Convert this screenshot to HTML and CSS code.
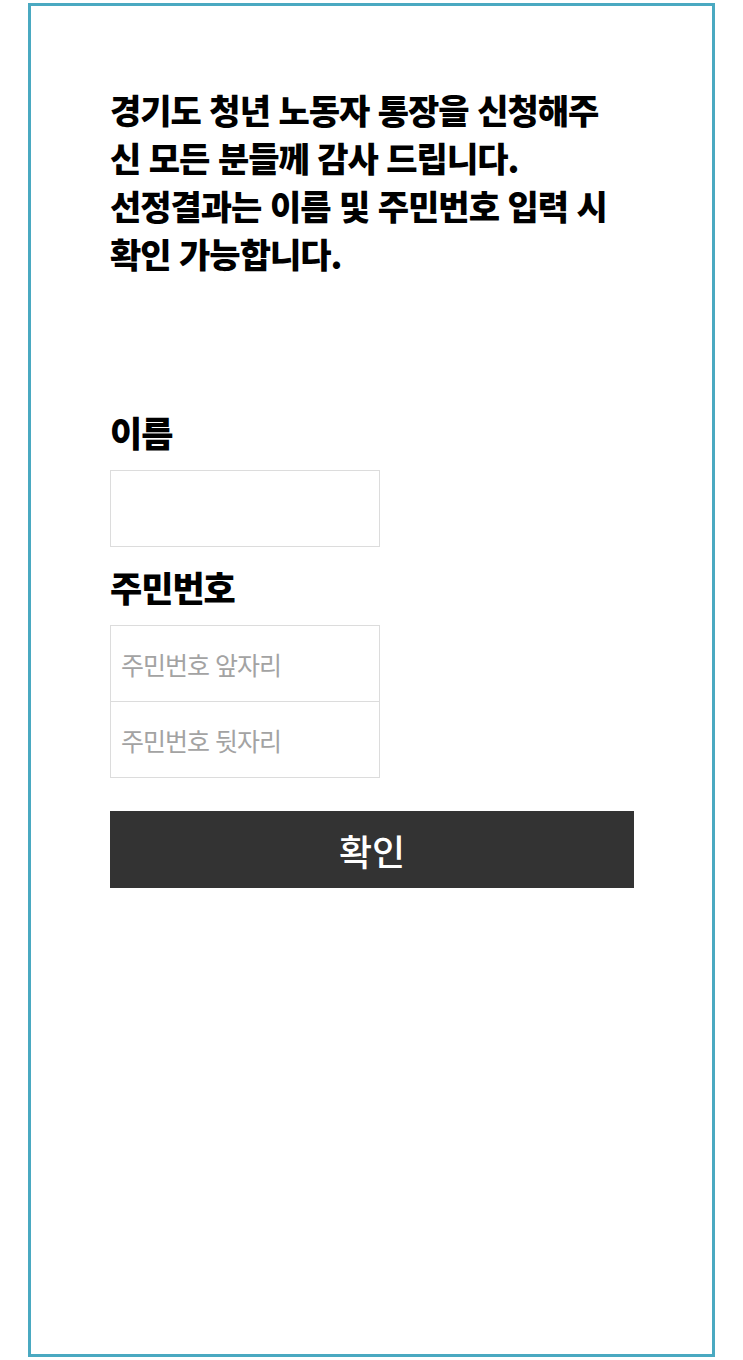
FILE: index.html
```html
<!DOCTYPE html>
<html lang="ko">
<head>
  <meta charset="UTF-8" />
  <title>경기도 청년 노동자 통장 선정결과 조회</title>
  <link rel="stylesheet" href="styles.css">
</head>
<body>
  <div class="frame">
    <p class="notice">경기도 청년 노동자 통장을 신청해주<br>신 모든 분들께 감사 드립니다.<br>선정결과는 이름 및 주민번호 입력 시<br>확인 가능합니다.</p>

    <form class="check-form" onsubmit="return false;">
      <label class="field-label" for="userName">이름</label>
      <input class="field-input" type="text" id="userName" autocomplete="off" />

      <label class="field-label second" for="juminFront">주민번호</label>
      <div class="jumin-group">
        <input class="field-input" type="text" id="juminFront" placeholder="주민번호 앞자리" autocomplete="off" />
        <input class="field-input" type="password" id="juminBack" placeholder="주민번호 뒷자리" autocomplete="off" />
      </div>

      <button class="submit-btn" type="submit">확인</button>
    </form>
  </div>
</body>
</html>
```

FILE: styles.css
```css
body {
  margin: 0;
  background: #fff;
  font-family: 'Noto Sans CJK KR', 'Noto Sans', sans-serif;
  color: #000;
}

.frame {
  box-sizing: border-box;
  width: 687px;
  height: 1354px;
  margin: 3px 0 0 28px;
  border: 3px solid #4aa9c1;
  padding: 80px 0 0 79px;
}

.notice {
  width: 560px;
  margin: 0;
  font-size: 34px;
  line-height: 48px;
  font-weight: 900;
  letter-spacing: -1px;
  white-space: nowrap;
}

.check-form {
  display: flex;
  flex-direction: column;
  align-items: flex-start;
  margin-top: 134px;
}

.field-label {
  font-size: 35px;
  line-height: 40px;
  font-weight: 900;
  letter-spacing: -1px;
  margin-bottom: 18px;
}

.field-label.second {
  margin-top: 20px;
}

.jumin-group {
  display: flex;
  flex-direction: column;
}

.jumin-group .field-input + .field-input {
  margin-top: -1px;
}

.field-input {
  box-sizing: border-box;
  width: 270px;
  height: 77px;
  margin: 0;
  padding: 0 10px;
  border: 1.5px solid #dcdcdc;
  border-radius: 0;
  outline: none;
  font-family: inherit;
  font-size: 25px;
  letter-spacing: -1px;
  color: #333;
  background: #fff;
}

.field-input::placeholder {
  color: #a3a3a3;
}

.submit-btn {
  width: 524px;
  height: 77px;
  margin-top: 33px;
  border: none;
  border-radius: 0;
  background: #333;
  color: #fff;
  font-family: inherit;
  font-size: 36px;
  font-weight: 500;
  cursor: pointer;
}
```
